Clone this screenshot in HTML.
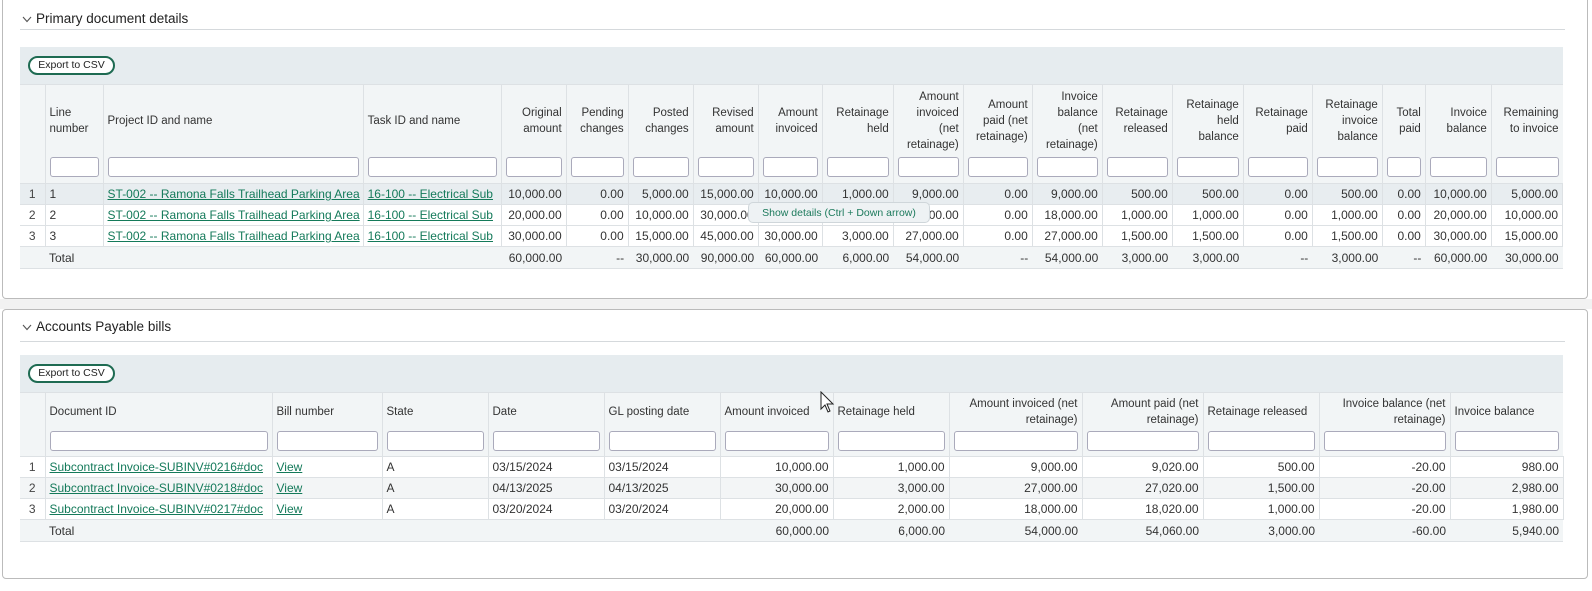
<!DOCTYPE html>
<html><head><meta charset="utf-8"><style>
*{box-sizing:border-box;margin:0;padding:0}
body{width:1592px;height:591px;background:#fff;font-family:"Liberation Sans",Arial,sans-serif;font-size:12px;color:#333;position:relative;overflow:hidden}
.frame{position:absolute;left:2px;top:0;width:1586px;height:299px;border:1px solid #bbb;border-top:none;border-radius:0 0 4px 4px}
.frame2{position:absolute;left:2px;top:309px;width:1586px;height:270px;border:1px solid #bbb;border-radius:4px}
.gap{position:absolute;left:0;top:299px;width:1592px;height:10px;background:#f2f2f2}
.title{position:absolute;left:22px;font-size:13.5px;color:#222}
.title svg{margin-right:4px;vertical-align:middle}
.rule{position:absolute;left:20px;width:1545px;height:1px;background:#d5d9dc}
.tb{position:absolute;left:20px;width:1543px;height:37px;background:#e6ecef}
.btn{position:absolute;left:8px;top:9px;height:19px;width:87px;border:2px solid #1e6b52;border-radius:10px;background:#fff;font-size:10.5px;text-align:center;line-height:15px;color:#222}
table{position:absolute;left:20px;border-collapse:collapse;table-layout:fixed;width:1543px}
td,th{border:1px solid #dde1e4;padding:0 4px;white-space:nowrap;overflow:hidden;font-weight:normal}
th{background:#f2f5f6;vertical-align:top;text-align:right;line-height:16px;color:#333;font-size:11.5px}
th.l{text-align:left}
th .h{display:flex;align-items:center;justify-content:flex-end;text-align:right}
th.l .h{justify-content:flex-start;text-align:left}
th input{display:block;width:100%;height:20px;border:1px solid #aab;border-radius:3px;background:#fff}
td{text-align:right;height:21px}
td.l{text-align:left}
td.n{border-left:none;border-right:1px solid #dde1e4;text-align:center;color:#444}
a{color:#147a5a;text-decoration:underline}
tr.sel td{background:#e8edf0}
tr.alt td{background:#f3f5f6}
tr.tot td{background:#f2f5f6;border-left-style:hidden;border-right-style:hidden;height:22px}
</style></head><body>
<div class="frame"></div><div class="gap"></div><div class="frame2"></div>

<div class="title" style="top:11px"><svg width="10" height="7" viewBox="0 0 10 7"><path d="M1 1 L5 5.5 L9 1" fill="none" stroke="#555" stroke-width="1.1"/></svg>Primary document details</div>
<div class="rule" style="top:29px"></div>
<div class="tb" style="top:47px"><div class="btn">Export to CSV</div></div>
<table style="top:84px">
<colgroup><col style="width:25px"><col style="width:58px"><col style="width:260px"><col style="width:138px"><col style="width:65px"><col style="width:62px"><col style="width:65px"><col style="width:65px"><col style="width:64px"><col style="width:71px"><col style="width:70px"><col style="width:69px"><col style="width:70px"><col style="width:70px"><col style="width:71px"><col style="width:69px"><col style="width:70px"><col style="width:43px"><col style="width:66px"><col style="width:71px"></colgroup>
<tr style="height:99px">
<th class="n" style="border-left:none"></th>
<th class="l"><div class="h" style="height:72px">Line<br>number</div><input></th>
<th class="l"><div class="h" style="height:72px">Project ID and name</div><input></th>
<th class="l"><div class="h" style="height:72px">Task ID and name</div><input></th>
<th><div class="h" style="height:72px">Original<br>amount</div><input></th>
<th><div class="h" style="height:72px">Pending<br>changes</div><input></th>
<th><div class="h" style="height:72px">Posted<br>changes</div><input></th>
<th><div class="h" style="height:72px">Revised<br>amount</div><input></th>
<th><div class="h" style="height:72px">Amount<br>invoiced</div><input></th>
<th><div class="h" style="height:72px">Retainage<br>held</div><input></th>
<th><div class="h" style="height:72px">Amount<br>invoiced<br>(net<br>retainage)</div><input></th>
<th><div class="h" style="height:72px">Amount<br>paid (net<br>retainage)</div><input></th>
<th><div class="h" style="height:72px">Invoice<br>balance<br>(net<br>retainage)</div><input></th>
<th><div class="h" style="height:72px">Retainage<br>released</div><input></th>
<th><div class="h" style="height:72px">Retainage<br>held<br>balance</div><input></th>
<th><div class="h" style="height:72px">Retainage<br>paid</div><input></th>
<th><div class="h" style="height:72px">Retainage<br>invoice<br>balance</div><input></th>
<th><div class="h" style="height:72px">Total<br>paid</div><input></th>
<th><div class="h" style="height:72px">Invoice<br>balance</div><input></th>
<th style="border-right:none"><div class="h" style="height:72px">Remaining<br>to invoice</div><input></th>
</tr>
<tr class="sel"><td class="n">1</td><td class="l">1</td><td class="l"><a>ST-002 -- Ramona Falls Trailhead Parking Area</a></td><td class="l"><a>16-100 -- Electrical Sub</a></td><td>10,000.00</td><td>0.00</td><td>5,000.00</td><td>15,000.00</td><td>10,000.00</td><td>1,000.00</td><td>9,000.00</td><td>0.00</td><td>9,000.00</td><td>500.00</td><td>500.00</td><td>0.00</td><td>500.00</td><td>0.00</td><td>10,000.00</td><td>5,000.00</td></tr>
<tr><td class="n">2</td><td class="l">2</td><td class="l"><a>ST-002 -- Ramona Falls Trailhead Parking Area</a></td><td class="l"><a>16-100 -- Electrical Sub</a></td><td>20,000.00</td><td>0.00</td><td>10,000.00</td><td>30,000.00</td><td>20,000.00</td><td>2,000.00</td><td>18,000.00</td><td>0.00</td><td>18,000.00</td><td>1,000.00</td><td>1,000.00</td><td>0.00</td><td>1,000.00</td><td>0.00</td><td>20,000.00</td><td>10,000.00</td></tr>
<tr><td class="n">3</td><td class="l">3</td><td class="l"><a>ST-002 -- Ramona Falls Trailhead Parking Area</a></td><td class="l"><a>16-100 -- Electrical Sub</a></td><td>30,000.00</td><td>0.00</td><td>15,000.00</td><td>45,000.00</td><td>30,000.00</td><td>3,000.00</td><td>27,000.00</td><td>0.00</td><td>27,000.00</td><td>1,500.00</td><td>1,500.00</td><td>0.00</td><td>1,500.00</td><td>0.00</td><td>30,000.00</td><td>15,000.00</td></tr>
<tr class="tot"><td></td><td class="l">Total</td><td></td><td></td><td>60,000.00</td><td>--</td><td>30,000.00</td><td>90,000.00</td><td>60,000.00</td><td>6,000.00</td><td>54,000.00</td><td>--</td><td>54,000.00</td><td>3,000.00</td><td>3,000.00</td><td>--</td><td>3,000.00</td><td>--</td><td>60,000.00</td><td>30,000.00</td></tr>
</table>
<div style="position:absolute;left:748px;top:202px;width:182px;height:21px;background:#eef2f4;border:1px solid #cfd6da;border-radius:5px;color:#1c7a5c;font-size:10.5px;text-align:center;line-height:20px">Show details (Ctrl + Down arrow)</div>

<div class="title" style="top:319px"><svg width="10" height="7" viewBox="0 0 10 7"><path d="M1 1 L5 5.5 L9 1" fill="none" stroke="#555" stroke-width="1.1"/></svg>Accounts Payable bills</div>
<div class="rule" style="top:341px"></div>
<div class="tb" style="top:355px"><div class="btn">Export to CSV</div></div>
<table style="top:392px">
<colgroup><col style="width:25px"><col style="width:227px"><col style="width:110px"><col style="width:106px"><col style="width:116px"><col style="width:116px"><col style="width:113px"><col style="width:116px"><col style="width:133px"><col style="width:121px"><col style="width:116px"><col style="width:131px"><col style="width:113px"></colgroup>
<tr style="height:64px">
<th class="n" style="border-left:none"></th>
<th class="l"><div class="h" style="height:38px">Document ID</div><input></th>
<th class="l"><div class="h" style="height:38px">Bill number</div><input></th>
<th class="l"><div class="h" style="height:38px">State</div><input></th>
<th class="l"><div class="h" style="height:38px">Date</div><input></th>
<th class="l"><div class="h" style="height:38px">GL posting date</div><input></th>
<th class="l"><div class="h" style="height:38px">Amount invoiced</div><input></th>
<th class="l"><div class="h" style="height:38px">Retainage held</div><input></th>
<th><div class="h" style="height:38px">Amount invoiced (net<br>retainage)</div><input></th>
<th><div class="h" style="height:38px">Amount paid (net<br>retainage)</div><input></th>
<th class="l"><div class="h" style="height:38px">Retainage released</div><input></th>
<th><div class="h" style="height:38px">Invoice balance (net<br>retainage)</div><input></th>
<th class="l" style="border-right:none"><div class="h" style="height:38px">Invoice balance</div><input></th>
</tr>
<tr><td class="n">1</td><td class="l"><a>Subcontract Invoice-SUBINV#0216#doc</a></td><td class="l"><a>View</a></td><td class="l">A</td><td class="l">03/15/2024</td><td class="l">03/15/2024</td><td>10,000.00</td><td>1,000.00</td><td>9,000.00</td><td>9,020.00</td><td>500.00</td><td>-20.00</td><td>980.00</td></tr>
<tr class="alt"><td class="n">2</td><td class="l"><a>Subcontract Invoice-SUBINV#0218#doc</a></td><td class="l"><a>View</a></td><td class="l">A</td><td class="l">04/13/2025</td><td class="l">04/13/2025</td><td>30,000.00</td><td>3,000.00</td><td>27,000.00</td><td>27,020.00</td><td>1,500.00</td><td>-20.00</td><td>2,980.00</td></tr>
<tr><td class="n">3</td><td class="l"><a>Subcontract Invoice-SUBINV#0217#doc</a></td><td class="l"><a>View</a></td><td class="l">A</td><td class="l">03/20/2024</td><td class="l">03/20/2024</td><td>20,000.00</td><td>2,000.00</td><td>18,000.00</td><td>18,020.00</td><td>1,000.00</td><td>-20.00</td><td>1,980.00</td></tr>
<tr class="tot"><td></td><td class="l">Total</td><td></td><td></td><td></td><td></td><td>60,000.00</td><td>6,000.00</td><td>54,000.00</td><td>54,060.00</td><td>3,000.00</td><td>-60.00</td><td>5,940.00</td></tr>
</table>
<svg style="position:absolute;left:820px;top:391px" width="16" height="24" viewBox="0 0 16 24"><path d="M1 1 L1 18 L5 14 L8 21 L10 20 L7 13 L13 13 Z" fill="#fff" stroke="#222" stroke-width="1"/></svg>
</body></html>
